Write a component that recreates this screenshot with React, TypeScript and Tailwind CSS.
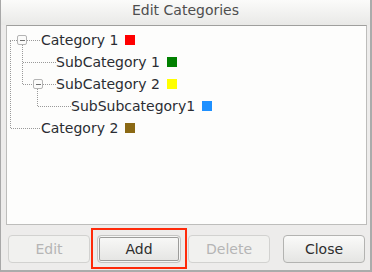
import React from "react";

const DOT = "#9a9a9a";
const BOX = "#b4b4b4";

function Line({ x1, y1, x2, y2 }: { x1: number; y1: number; x2: number; y2: number }) {
  return <line x1={x1} y1={y1} x2={x2} y2={y2} stroke={DOT} strokeWidth={1} strokeDasharray="1 1" />;
}

function Expander({ x }: { x: number }) {
  return (
    <g>
      <rect x={x + 0.5} y={6.5} width={9} height={9} rx={1.5} fill="#fbfbfa" stroke={BOX} />
      <line x1={x + 3} y1={11.5} x2={x + 8} y2={11.5} stroke="#6f6f6f" strokeWidth={1} />
    </g>
  );
}

type Row = { label: string; color: string; width: number; draw: React.ReactNode };

const rows: Row[] = [
  {
    label: "Category 1",
    color: "#ff0000",
    width: 34,
    draw: (
      <>
        <Line x1={3.5} y1={12} x2={3.5} y2={22} />
        <Line x1={3} y1={11.5} x2={10} y2={11.5} />
        <Line x1={20} y1={11.5} x2={34} y2={11.5} />
        <Line x1={15.5} y1={16} x2={15.5} y2={22} />
        <Expander x={10} />
      </>
    ),
  },
  {
    label: "SubCategory 1",
    color: "#008000",
    width: 49,
    draw: (
      <>
        <Line x1={3.5} y1={0} x2={3.5} y2={22} />
        <Line x1={15.5} y1={0} x2={15.5} y2={22} />
        <Line x1={16} y1={11.5} x2={49} y2={11.5} />
      </>
    ),
  },
  {
    label: "SubCategory 2",
    color: "#ffff00",
    width: 49,
    draw: (
      <>
        <Line x1={3.5} y1={0} x2={3.5} y2={22} />
        <Line x1={15.5} y1={0} x2={15.5} y2={12} />
        <Line x1={16} y1={11.5} x2={26} y2={11.5} />
        <Line x1={36} y1={11.5} x2={49} y2={11.5} />
        <Line x1={30.5} y1={16} x2={30.5} y2={22} />
        <Expander x={26} />
      </>
    ),
  },
  {
    label: "SubSubcategory1",
    color: "#1e90ff",
    width: 64,
    draw: (
      <>
        <Line x1={3.5} y1={0} x2={3.5} y2={22} />
        <Line x1={30.5} y1={0} x2={30.5} y2={12} />
        <Line x1={31} y1={11.5} x2={64} y2={11.5} />
      </>
    ),
  },
  {
    label: "Category 2",
    color: "#8b6914",
    width: 34,
    draw: (
      <>
        <Line x1={3.5} y1={0} x2={3.5} y2={12} />
        <Line x1={4} y1={11.5} x2={34} y2={11.5} />
      </>
    ),
  },
];

function Btn({ label, disabled, focus, w }: { label: string; disabled?: boolean; focus?: boolean; w: string }) {
  const base =
    "h-[28px] rounded-[4px] border flex items-center justify-center text-[14px] leading-none " + w + " ";
  if (disabled)
    return (
      <div className={base + "border-[#d2d2d0] bg-[#f1f1ef] text-[#b5b5b5]"}>{label}</div>
    );
  if (focus)
    return (
      <div
        className={
          base +
          "border-[#c4c4c2] bg-gradient-to-b from-[#f9f9f8] to-[#e4e4e2] text-[#2e2e2e] shadow-[inset_0_0_0_1px_#f6f6f5,inset_0_0_0_2px_#9c9c9a]"
        }
      >
        {label}
      </div>
    );
  return (
    <div className={base + "border-[#b3b3b1] bg-gradient-to-b from-[#fafaf9] to-[#e5e5e3] text-[#2e2e2e]"}>
      {label}
    </div>
  );
}

export default function App() {
  return (
    <div
      className="relative w-[372px] h-[272px] bg-[#edeceb] border-l border-l-[#a8a8a8] border-r-2 border-r-[#ababab] border-b-2 border-b-[#ababab] flex flex-col"
      style={{ fontFamily: '"DejaVu Sans", Verdana, sans-serif' }}
    >
      <div className="h-[25px] shrink-0 bg-gradient-to-b from-[#fbfbfa] to-[#e9e9e7] flex items-center justify-center pb-[4px] text-[14px] text-[#4e4e4e]">
        Edit Categories
      </div>
      <div className="ml-[5px] mr-[3px] h-[200px] shrink-0 border border-[#bdbdbb] border-t-[#9f9f9d] bg-[#fdfdfc] pt-[3px]">
        {rows.map((r) => (
          <div key={r.label} className="h-[22px] flex items-center">
            <svg width={r.width} height={22} className="shrink-0 block">
              {r.draw}
            </svg>
            <span className="text-[14px] leading-none text-[#2b2d33] whitespace-nowrap">{r.label}</span>
            <span className="ml-[7px] w-[10px] h-[10px] shrink-0" style={{ backgroundColor: r.color }} />
          </div>
        ))}
      </div>
      <div className="mt-[10px] flex items-center pl-[7px] pr-[5px] gap-[7px]">
        <Btn label="Edit" disabled w="w-[82px]" />
        <Btn label="Add" focus w="w-[84px]" />
        <Btn label="Delete" disabled w="w-[82px]" />
        <div className="ml-auto">
          <Btn label="Close" w="w-[82px]" />
        </div>
      </div>
      <div className="absolute left-[90px] top-[228px] w-[96px] h-[41px] border-2 border-[#ff2a0a]" />
    </div>
  );
}
